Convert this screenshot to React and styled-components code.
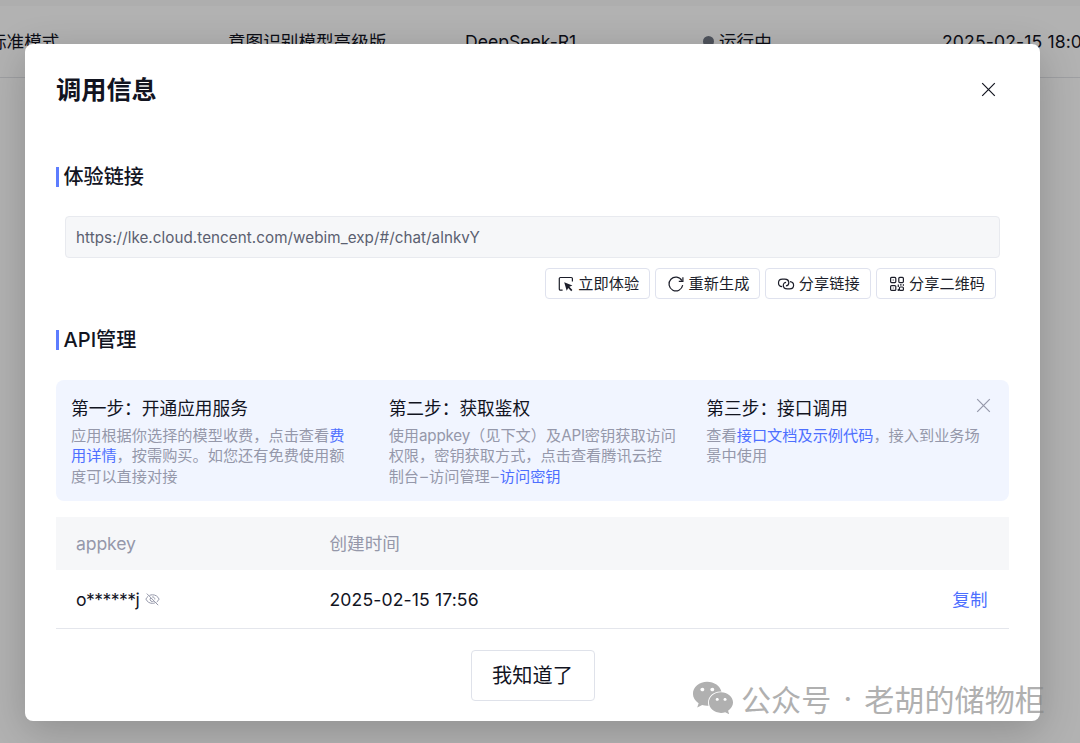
import React from "react";
import styled, { createGlobalStyle } from "styled-components";
import { FaWeixin } from "react-icons/fa";

const GlobalStyle = createGlobalStyle`
	* {
		box-sizing: border-box;
	}
	body {
		margin: 0;
		font-family: Inter, "Noto Sans CJK SC", sans-serif;
		color: #12141f;
		overflow: hidden;
	}
`;

const Page = styled.div`
	position: relative;
	height: 743px;
	overflow: hidden;
	background: #fff;
`;

const PageHead = styled.div`
	height: 6px;
	background: #f9f9fa;
`;

const AppRow = styled.div`
	display: grid;
	grid-template-columns: 239px 237px 238px 239px 1fr;
	align-items: center;
	height: 72px;
	margin-left: -11px;
	border-bottom: 1px solid #e3e4e8;
	font-size: 17.6px;
	line-height: 24px;
	white-space: nowrap;
`;

const Status = styled.span`
	display: flex;
	align-items: center;
	gap: 5px;
	&::before {
		content: "";
		width: 11px;
		height: 11px;
		border-radius: 50%;
		background: #717885;
	}
`;

const Overlay = styled.div`
	position: absolute;
	inset: 0;
	padding: 43.5px 0 0 25px;
	background: rgba(0, 0, 0, 0.3);
`;

const Dialog = styled.div`
	width: 1014.5px;
	height: 677px;
	padding: 0 30.5px 0 31px;
	border-radius: 8px;
	background: #fff;
	box-shadow: 0 10px 40px rgba(0, 0, 0, 0.2);
`;

const Header = styled.header`
	display: flex;
	justify-content: space-between;
	align-items: center;
	height: 36px;
	padding-right: 13px;
`;

const Title = styled.h1`
	margin: 0;
	font-size: 25.2px;
	line-height: 36px;
	font-weight: 600;
`;

const IconButton = styled.button`
	display: flex;
	padding: 0 0 2px;
	border: 0;
	background: none;
	color: ${(props) => props.$color || "#12141f"};
`;

const DialogBody = styled.div`
	padding-top: 28.5px;
`;

const SectionTitle = styled.h2`
	display: flex;
	align-items: center;
	gap: 5px;
	height: 28px;
	margin: ${(props) => props.$top}px 0 0;
	font-size: 20.1px;
	line-height: 28px;
	font-weight: 500;
	&::before {
		content: "";
		width: 2.5px;
		height: 20px;
		background: #5d7dff;
	}
`;

const LinkBox = styled.div`
	height: 42px;
	margin: 25.5px 9px 0;
	padding: 0 10px;
	border: 1px solid #e8eaef;
	border-radius: 4px;
	background: #f6f7f9;
	color: #5b6070;
	font-size: 15.2px;
	line-height: 41px;
	letter-spacing: 0.06px;
`;

const Actions = styled.div`
	display: flex;
	justify-content: flex-end;
	gap: 5px;
	margin: 10px 13px 0 0;
`;

const ActionButton = styled.button`
	display: flex;
	align-items: center;
	gap: 3.5px;
	height: 30.5px;
	padding: 1px 10px 0 11px;
	border: 1.3px solid #dfe2ee;
	border-radius: 4px;
	background: #fff;
	color: #1c1e2a;
	font-family: inherit;
	font-size: 15.2px;
	line-height: 23px;
	white-space: nowrap;
`;

const Guide = styled.div`
	position: relative;
	display: grid;
	grid-template-columns: repeat(3, 1fr);
	height: 121px;
	margin-top: 26.5px;
	padding-top: 16px;
	border-radius: 8px;
	background: #f1f5ff;
`;

const GuideClose = styled.div`
	position: absolute;
	top: 18px;
	right: 18px;
`;

const Step = styled.div`
	padding-left: 15px;
	white-space: nowrap;
`;

const StepTitle = styled.div`
	font-size: 17.7px;
	line-height: 25px;
`;

const StepText = styled.div`
	margin-top: 5px;
	color: #9598aa;
	font-size: 15.2px;
	line-height: 20.3px;
	a {
		color: #4d6fff;
	}
`;

const Latin = styled.span`
	letter-spacing: -0.2px;
`;

const Dash = styled.span`
	display: inline-block;
	width: 10px;
	text-align: center;
`;

const Table = styled.div`
	margin-top: 16px;
	font-size: 17.6px;
`;

const TableRow = styled.div`
	display: grid;
	grid-template-columns: 253.5px 1fr auto;
	align-items: center;
	height: 59px;
	padding: 1px 21.5px 0 20px;
	border-bottom: 1px solid #e4e6ec;
	line-height: 24px;
`;

const TableHead = styled(TableRow)`
	height: 53px;
	padding-top: 0;
	border-bottom: 0;
	background: #f6f7f9;
	color: #9598aa;
`;

const HeadLabel = styled.span`
	letter-spacing: ${(props) => props.$spacing || 0}px;
`;

const KeyCell = styled.div`
	display: flex;
	align-items: center;
	gap: 6px;
	letter-spacing: -0.55px;
`;

const TimeCell = styled.span`
	letter-spacing: 0.12px;
`;

const CopyLink = styled.a`
	color: #4d6fff;
`;

const Footer = styled.footer`
	display: flex;
	justify-content: center;
	margin-top: 21px;
`;

const ConfirmButton = styled.button`
	width: 124px;
	height: 50.5px;
	padding: 0 0 1px;
	border: 1.3px solid #dfe2ea;
	border-radius: 4px;
	background: #fff;
	color: #12141f;
	font-family: inherit;
	font-size: 20.2px;
`;

const Watermark = styled.div`
	position: absolute;
	left: 692px;
	top: 676px;
	display: flex;
	align-items: center;
	height: 44px;
	color: rgb(134, 134, 134);
	opacity: 0.65;
	font-family: "Noto Sans CJK SC", sans-serif;
	font-size: 30.1px;
	line-height: 44px;
	white-space: nowrap;
	svg {
		margin-right: 7px;
	}
`;

const Dot = styled.span`
	width: 33px;
	text-align: center;
	font-family: Inter, sans-serif;
`;

const CloseIcon = () => (
	<svg width="15" height="15" viewBox="0 0 15 15" fill="none" stroke="currentColor" strokeWidth="1.2">
		<path d="M1.2 1.2l12.6 12.6M13.8 1.2L1.2 13.8" />
	</svg>
);

const TryIcon = () => (
	<svg width="18" height="18" viewBox="0 0 18 18" fill="none" stroke="currentColor" strokeWidth="1.2">
		<path d="M5.6 15.2H3.4c-.6 0-1.1-.5-1.1-1.1V3.6c0-.6.5-1.1 1.1-1.1h10.9c.6 0 1.1.5 1.1 1.1v2.9" />
		<path d="M7.2 7.2l8.2 3.2-3 1.4 3 3.3-1.2 1.1-3-3.3-1.5 2.8z" fill="currentColor" stroke="none" />
	</svg>
);

const RefreshIcon = () => (
	<svg width="18" height="18" viewBox="0 0 18 18" fill="none" stroke="currentColor" strokeWidth="1.2">
		<path d="M15.7 10.2A6.9 6.9 0 1 1 14.9 5.6" />
		<path d="M15.9 2.2v4.1h-4.1" />
	</svg>
);

const ChainIcon = () => (
	<svg width="18" height="18" viewBox="0 0 18 18" fill="none" stroke="currentColor" strokeWidth="1.2">
		<path d="M5.2 11.6C3 11.4 1.5 10 1.5 7.9c0-2.2 1.6-3.7 3.9-3.7h2.4c2.4 0 4 1.6 4 3.6 0 1.9-1.3 3-2.9 3" />
		<path d="M13 6.6c2.2.2 3.6 1.6 3.6 3.7 0 2.2-1.6 3.6-3.9 3.6h-2.4c-2.4 0-4-1.6-4-3.6 0-1.8 1.3-2.9 2.8-2.9" />
	</svg>
);

const QrIcon = () => (
	<svg width="18" height="18" viewBox="0 0 18 18" fill="none" stroke="currentColor" strokeWidth="1.2">
		<rect x="2.6" y="2.4" width="5.2" height="5.2" rx="1" />
		<rect x="10.8" y="2.4" width="4.6" height="5.2" rx="1" />
		<rect x="2.6" y="10.6" width="5.2" height="4.8" rx="1" />
		<rect x="11.4" y="12" width="4" height="3.4" rx="1" />
		<path d="M4.7 5h1M4.8 13h.8M10.3 9.4v2.6M10.3 14v2M12 9.9h1.6M15.4 9.2v1.6" />
	</svg>
);

const HiddenIcon = () => (
	<svg width="15" height="13" viewBox="0 0 15 13" fill="none" stroke="#9598aa" strokeWidth="1">
		<path d="M4.5 2.4C5.4 2 6.4 1.8 7.5 1.8c3 0 5.3 1.6 6.6 4.3-.6 1.2-1.4 2.2-2.5 3M9.9 9.9c-.8.3-1.6.5-2.4.5-3 0-5.3-1.6-6.6-4.3.6-1.2 1.4-2.2 2.4-3" />
		<path d="M5.6 5a2.2 2.2 0 0 0 3.2 3M7.2 3.9a2.3 2.3 0 0 1 2.6 2.5M1.8.6l11.4 11.6" />
	</svg>
);

const actions = [
	{ label: "立即体验", icon: <TryIcon /> },
	{ label: "重新生成", icon: <RefreshIcon /> },
	{ label: "分享链接", icon: <ChainIcon /> },
	{ label: "分享二维码", icon: <QrIcon /> },
];

function App() {
	return (
		<Page>
			<GlobalStyle />
			<PageHead />
			<AppRow>
				<span>标准模式</span>
				<span>意图识别模型高级版</span>
				<span>DeepSeek-R1</span>
				<Status>运行中</Status>
				<TimeCell>2025-02-15 18:0</TimeCell>
			</AppRow>

			<Overlay>
				<Dialog>
					<DialogBody>
						<Header>
							<Title>调用信息</Title>
							<IconButton aria-label="close">
								<CloseIcon />
							</IconButton>
						</Header>

						<SectionTitle $top={54.5}>体验链接</SectionTitle>
						<LinkBox>https://lke.cloud.tencent.com/webim_exp/#/chat/alnkvY</LinkBox>
						<Actions>
							{actions.map((item) => (
								<ActionButton key={item.label}>
									{item.icon}
									{item.label}
								</ActionButton>
							))}
						</Actions>

						<SectionTitle $top={27}>API管理</SectionTitle>
						<Guide>
							<Step>
								<StepTitle>第一步：开通应用服务</StepTitle>
								<StepText>
									应用根据你选择的模型收费，点击查看<a>费</a>
									<br />
									<a>用详情</a>，按需购买。如您还有免费使用额
									<br />
									度可以直接对接
								</StepText>
							</Step>
							<Step>
								<StepTitle>第二步：获取鉴权</StepTitle>
								<StepText>
									使用<Latin>appkey</Latin>（见下文）及<Latin>API</Latin>密钥获取访问
									<br />
									权限，密钥获取方式，点击查看腾讯云控
									<br />
									制台<Dash>–</Dash>访问管理<Dash>–</Dash>
									<a>访问密钥</a>
								</StepText>
							</Step>
							<Step>
								<StepTitle>第三步：接口调用</StepTitle>
								<StepText>
									查看<a>接口文档及示例代码</a>，接入到业务场
									<br />
									景中使用
								</StepText>
							</Step>
							<GuideClose>
								<IconButton $color="#9598aa" aria-label="close guide">
									<CloseIcon />
								</IconButton>
							</GuideClose>
						</Guide>

						<Table>
							<TableHead>
								<HeadLabel $spacing={-0.1}>appkey</HeadLabel>
								<HeadLabel>创建时间</HeadLabel>
							</TableHead>
							<TableRow>
								<KeyCell>
									o******j
									<HiddenIcon />
								</KeyCell>
								<TimeCell>2025-02-15 17:56</TimeCell>
								<CopyLink>复制</CopyLink>
							</TableRow>
						</Table>

						<Footer>
							<ConfirmButton>我知道了</ConfirmButton>
						</Footer>
					</DialogBody>
				</Dialog>
			</Overlay>

			<Watermark>
				<FaWeixin size={42} />
				<span>公众号</span>
				<Dot>·</Dot>
				<span>老胡的储物柜</span>
			</Watermark>
		</Page>
	);
}

export default App;
